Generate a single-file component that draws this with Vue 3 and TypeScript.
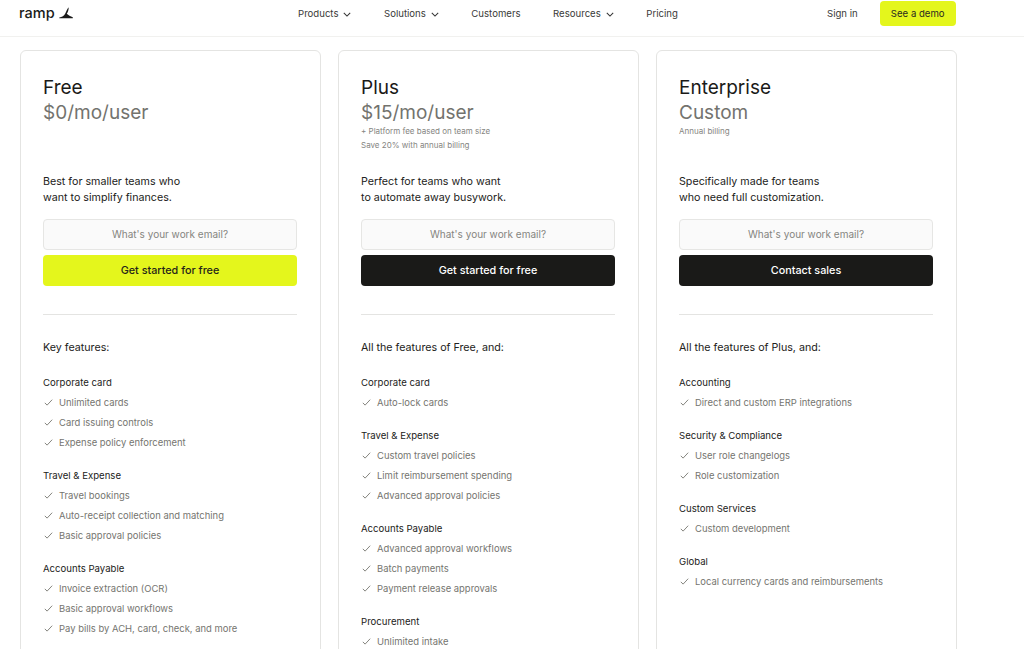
<script setup lang="ts">
interface Group { title: string; items: string[] }
interface Plan {
  name: string; price: string; notes: string[]; desc: string[]; cta: string; primary: boolean; lead: string; groups: Group[]
}
const nav = [
  { label: 'Products', caret: true },
  { label: 'Solutions', caret: true },
  { label: 'Customers', caret: false },
  { label: 'Resources', caret: true },
  { label: 'Pricing', caret: false },
]
const plans: Plan[] = [
  {
    name: 'Free', price: '$0/mo/user', notes: [], desc: ['Best for smaller teams who', 'want to simplify finances.'],
    cta: 'Get started for free', primary: true, lead: 'Key features:',
    groups: [
      { title: 'Corporate card', items: ['Unlimited cards', 'Card issuing controls', 'Expense policy enforcement'] },
      { title: 'Travel & Expense', items: ['Travel bookings', 'Auto-receipt collection and matching', 'Basic approval policies'] },
      { title: 'Accounts Payable', items: ['Invoice extraction (OCR)', 'Basic approval workflows', 'Pay bills by ACH, card, check, and more'] },
    ],
  },
  {
    name: 'Plus', price: '$15/mo/user', notes: ['+ Platform fee based on team size', 'Save 20% with annual billing'],
    desc: ['Perfect for teams who want', 'to automate away busywork.'],
    cta: 'Get started for free', primary: false, lead: 'All the features of Free, and:',
    groups: [
      { title: 'Corporate card', items: ['Auto-lock cards'] },
      { title: 'Travel & Expense', items: ['Custom travel policies', 'Limit reimbursement spending', 'Advanced approval policies'] },
      { title: 'Accounts Payable', items: ['Advanced approval workflows', 'Batch payments', 'Payment release approvals'] },
      { title: 'Procurement', items: ['Unlimited intake'] },
    ],
  },
  {
    name: 'Enterprise', price: 'Custom', notes: ['Annual billing'],
    desc: ['Specifically made for teams', 'who need full customization.'],
    cta: 'Contact sales', primary: false, lead: 'All the features of Plus, and:',
    groups: [
      { title: 'Accounting', items: ['Direct and custom ERP integrations'] },
      { title: 'Security & Compliance', items: ['User role changelogs', 'Role customization'] },
      { title: 'Custom Services', items: ['Custom development'] },
      { title: 'Global', items: ['Local currency cards and reimbursements'] },
    ],
  },
]
</script>

<template>
  <div class="page">
    <header class="topbar">
      <a class="logo">
        <span class="logo-word">ramp</span>
        <svg class="logo-mark" viewBox="0 0 14 12" width="14" height="12" aria-hidden="true">
          <path d="M0.3 10.4 C3 10.2 5.2 8.6 6.4 6.2 C7.4 4.2 8 2 9.6 0.2 C9.8 2.6 9.2 4.6 7.8 6.8 C9.4 8.2 11.4 9.4 13.8 10.2 L13.8 11.2 L0.3 11.2 Z" fill="#1a1a1a" />
        </svg>
      </a>
      <nav class="menu">
        <a v-for="n in nav" :key="n.label" class="menu-item">
          {{ n.label }}
          <svg v-if="n.caret" class="caret" viewBox="0 0 10 6" width="8" height="5" aria-hidden="true">
            <path d="M1 1l4 4 4-4" fill="none" stroke="#333" stroke-width="1.3" />
          </svg>
        </a>
      </nav>
      <div class="actions">
        <a class="signin">Sign in</a>
        <a class="demo">See a demo</a>
      </div>
    </header>
    <main class="plans">
      <section v-for="p in plans" :key="p.name" class="card">
        <h2 class="name">{{ p.name }}</h2>
        <div class="price">{{ p.price }}</div>
        <div class="notes">
          <div v-for="t in p.notes" :key="t" class="note">{{ t }}</div>
        </div>
        <p class="desc"><span v-for="d in p.desc" :key="d" class="desc-line">{{ d }}</span></p>
        <div class="email">What's your work email?</div>
        <button class="cta" :class="{ 'cta-primary': p.primary }">{{ p.cta }}</button>
        <hr class="divider" />
        <div class="lead">{{ p.lead }}</div>
        <div class="group" v-for="g in p.groups" :key="g.title">
          <div class="group-title">{{ g.title }}</div>
          <div class="item" v-for="i in g.items" :key="i">
            <svg class="check" viewBox="0 0 10 8" width="9" height="7" aria-hidden="true">
              <path d="M0.8 4.4l2.6 2.6L9.2 0.8" fill="none" stroke="#80807a" stroke-width="1.1" />
            </svg>
            <span>{{ i }}</span>
          </div>
        </div>
      </section>
    </main>
  </div>
</template>

<style>
html, body { margin: 0; background: #fff; overflow: hidden; }
</style>

<style scoped>
.page {
  height: 649px;
  overflow: hidden;
  font-family: Inter, "Liberation Sans", sans-serif;
  color: #1a1a18;
  background: #fff;
}
.topbar {
  height: 37px;
  box-sizing: border-box;
  border-bottom: 1px solid #f1f1ef;
  display: flex;
  align-items: center;
  padding: 0 0 9px 19px;
}
.logo { display: flex; align-items: center; gap: 4px; width: 279px; }
.logo-word { font-size: 14.5px; font-weight: 500; line-height: 1; }
.logo-mark { margin-top: -1px; }
.menu { display: flex; align-items: center; width: 380px; font-size: 9.6px; color: #3a3a38; }
.menu-item { display: flex; align-items: center; gap: 5px; margin-right: 32.5px; }
.caret { margin-top: 1px; }
.actions { display: flex; align-items: center; margin-left: 149px; font-size: 9.6px; }
.signin { color: #3a3a38; margin-right: 22px; }
.demo {
  width: 76px; height: 25px; display: flex; align-items: center; justify-content: center;
  background: #e4f61c; border-radius: 4px; color: #2a2a20;
}
.plans { display: flex; gap: 17px; padding: 13px 0 0 20px; }
.card {
  width: 301px; box-sizing: border-box; height: 800px; flex: none;
  border: 1px solid #e4e4e2; border-radius: 6px;
  padding: 25px 23px 24px 22px;
}
.name { margin: 0; font-size: 19px; font-weight: 400; line-height: 24px; color: #1a1a18; }
.price { font-size: 19px; line-height: 26px; color: #73736e; }
.notes { height: 50px; margin-top: -2px; }
.note { font-size: 8px; line-height: 14px; color: #85857f; }
.desc { margin: 0; font-size: 10.7px; line-height: 16px; color: #222220; }
.desc-line { display: block; }
.email {
  margin-top: 13px; height: 31px; box-sizing: border-box; padding-bottom: 2px;
  display: flex; align-items: center; justify-content: center;
  background: #fafafa; border: 1px solid #e6e6e4; border-radius: 4px;
  font-size: 10px; color: #85857f;
}
.cta {
  display: block; width: 100%; margin-top: 5px; height: 31px; border: 0; border-radius: 4px;
  background: #1a1a18; color: #fff; font: inherit; font-size: 10.8px; font-weight: 500;
}
.cta-primary { background: #e4f61c; color: #24241a; }
.divider { border: 0; border-top: 1px solid #e4e4e2; margin: 28px 0 0; }
.lead { margin-top: 26px; font-size: 10.7px; line-height: 14px; color: #222220; margin-bottom: 21px; }
.group { margin-bottom: 17px; }
.group-title { font-size: 9.6px; line-height: 14px; color: #222220; }
.item {
  display: flex; align-items: center; gap: 6px; height: 20px;
  font-size: 9.45px; color: #75756f;
}
.check { margin-left: 1px; }
.group-title + .item { margin-top: 2px; }
</style>
